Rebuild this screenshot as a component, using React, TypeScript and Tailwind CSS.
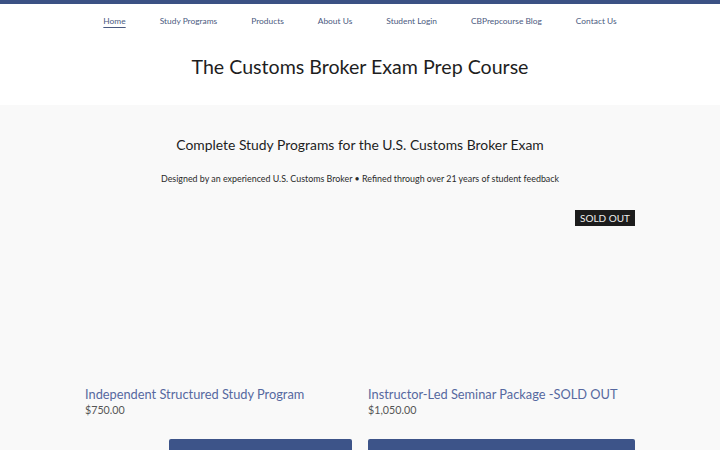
export default function App() {
  const nav = [
    "Home",
    "Study Programs",
    "Products",
    "About Us",
    "Student Login",
    "CBPrepcourse Blog",
    "Contact Us",
  ];
  return (
    <div className="h-[450px] overflow-hidden bg-[#f9f9f9] font-['Lato',sans-serif]">
      <div className="h-[4px] bg-[#3b5184]" />
      <header className="h-[101px] bg-white flex flex-col items-center">
        <nav className="flex gap-[34px] pt-[10px] text-[8.4px] leading-[14px] text-[#4b5a80]">
          {nav.map((n, i) => (
            <a
              key={n}
              className={i === 0 ? "underline underline-offset-[3px] decoration-[#4b5a80]" : ""}
            >
              {n}
            </a>
          ))}
        </nav>
        <h1 className="mt-[24px] text-[19.6px] leading-[30px] text-[#1e1e1e]">
          The Customs Broker Exam Prep Course
        </h1>
      </header>
      <main className="flex flex-col items-center">
        <h2 className="mt-[30px] text-[13.9px] leading-[20px] text-[#1e1e1e]">
          Complete Study Programs for the U.S. Customs Broker Exam
        </h2>
        <p className="mt-[17px] text-[8.9px] leading-[14px] text-[#2a2a2a]">
          Designed by an experienced U.S. Customs Broker • Refined through over 21 years of student feedback
        </p>
        <div className="mt-[24px] grid grid-cols-2 gap-[16px] w-[550px]">
          <div className="flex flex-col">
            <div className="h-[170px]" />
            <div className="mt-[5px] whitespace-nowrap text-[12.8px] leading-[18px] text-[#5668a0]">
              Independent Structured Study Program
            </div>
            <div className="text-[10.7px] leading-[14px] text-[#555]">$750.00</div>
            <div className="mt-[22px] flex items-start">
              <div className="w-[84px] pt-[8px] text-center text-[10px] text-[#333]">Quantity</div>
              <button className="flex-1 h-[40px] rounded-[2px] bg-[#3d5489] text-white text-[11px] pt-[8px]">
                Add to Cart
              </button>
            </div>
          </div>
          <div className="flex flex-col">
            <div className="relative h-[170px]">
              <span className="absolute right-0 top-0 bg-[#1c1c1c] text-[#eee] text-[10px] leading-[16px] px-[5px]">
                SOLD OUT
              </span>
            </div>
            <div className="mt-[5px] whitespace-nowrap text-[12.8px] leading-[18px] text-[#5668a0]">
              Instructor-Led Seminar Package -SOLD OUT
            </div>
            <div className="text-[10.7px] leading-[14px] text-[#555]">$1,050.00</div>
            <div className="mt-[22px] flex">
              <button className="flex-1 h-[40px] rounded-[2px] bg-[#3d5489] text-white text-[11px] pt-[8px]">
                Sold Out
              </button>
            </div>
          </div>
        </div>
      </main>
    </div>
  );
}
